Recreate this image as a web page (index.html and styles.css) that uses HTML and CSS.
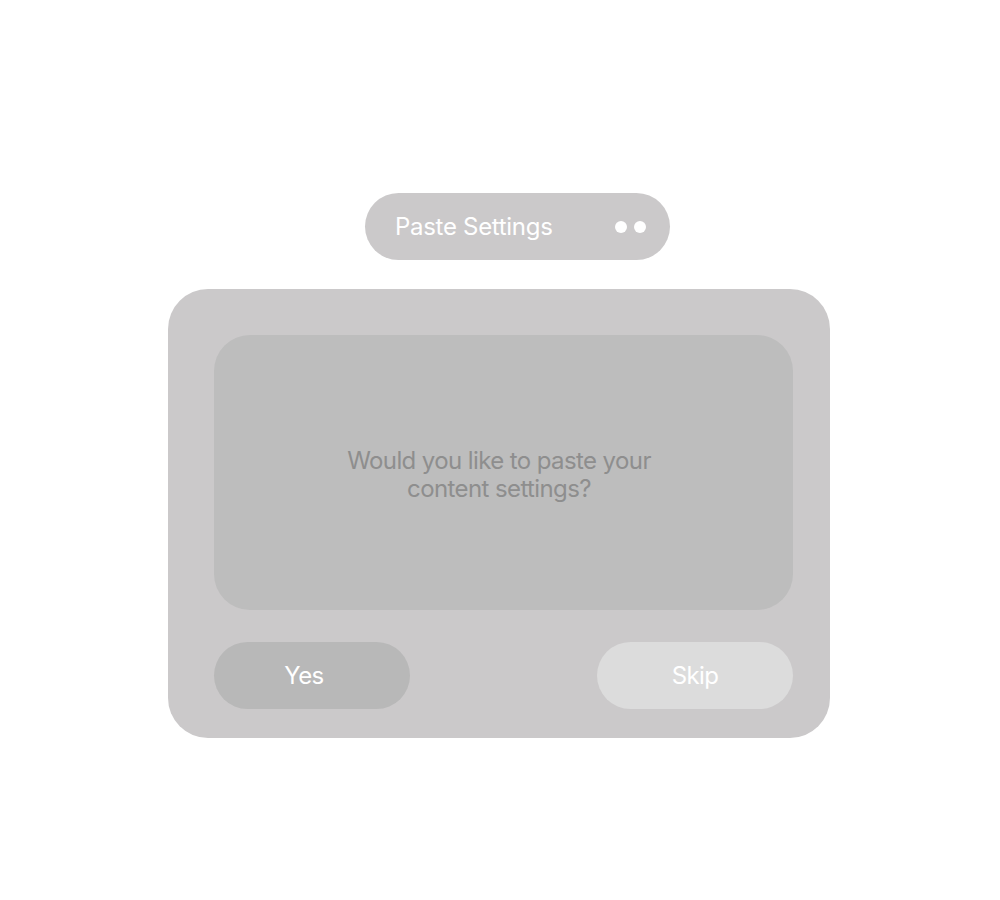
FILE: index.html
```html
<!DOCTYPE html>
<html>
<head>
<meta charset="utf-8">
<link rel="stylesheet" href="styles.css">
</head>
<body>
<div class="stage">
  <div class="pill">
    <span class="pill-title">Paste Settings</span>
    <span class="dots"><i class="dot"></i><i class="dot"></i></span>
  </div>
  <div class="card">
    <div class="panel">
      <p class="question">Would you like to paste your<br>content settings?</p>
    </div>
    <div class="actions">
      <button class="btn btn-yes">Yes</button>
      <button class="btn btn-skip">Skip</button>
    </div>
  </div>
</div>
</body>
</html>
```
FILE: styles.css
```css
html, body {
  margin: 0;
  padding: 0;
  background: #ffffff;
  font-family: Inter, "Liberation Sans", Arial, sans-serif;
}
.stage {
  padding: 193px 0 0 168px;
  display: flex;
  flex-direction: column;
  align-items: flex-start;
}
.pill {
  margin-left: 197px;
  width: 305px;
  height: 67px;
  box-sizing: border-box;
  border-radius: 34px;
  background: #cbc9ca;
  display: flex;
  align-items: center;
  justify-content: space-between;
  padding: 0 24px 0 30px;
  color: #ffffff;
}
.pill-title {
  font-size: 24px;
  letter-spacing: -0.3px;
}
.dots {
  display: flex;
  gap: 7px;
}
.dot {
  width: 12px;
  height: 12px;
  border-radius: 50%;
  background: #ffffff;
  display: block;
}
.card {
  margin-top: 29px;
  width: 662px;
  height: 449px;
  box-sizing: border-box;
  border-radius: 40px;
  background: #cbc9ca;
  padding: 46px 37px 29px 46px;
  display: flex;
  flex-direction: column;
  gap: 32px;
}
.panel {
  height: 275px;
  box-sizing: border-box;
  padding: 4px 9px 0 0;
  border-radius: 36px;
  background: #bdbdbd;
  display: flex;
  align-items: center;
  justify-content: center;
}
.question {
  margin: 0;
  text-align: center;
  color: #8e8e8e;
  font-size: 24px;
  line-height: 28px;
  letter-spacing: -0.6px;
}
.actions {
  display: flex;
  justify-content: space-between;
}
.btn {
  width: 196px;
  height: 67px;
  border: none;
  border-radius: 34px;
  color: #ffffff;
  font-family: inherit;
  font-size: 24px;
  letter-spacing: -0.6px;
  cursor: pointer;
}
.btn-yes { background: #b8b8b8; padding: 0 16px 0 0; }
.btn-skip { background: #dcdcdc; padding: 0; }
```
